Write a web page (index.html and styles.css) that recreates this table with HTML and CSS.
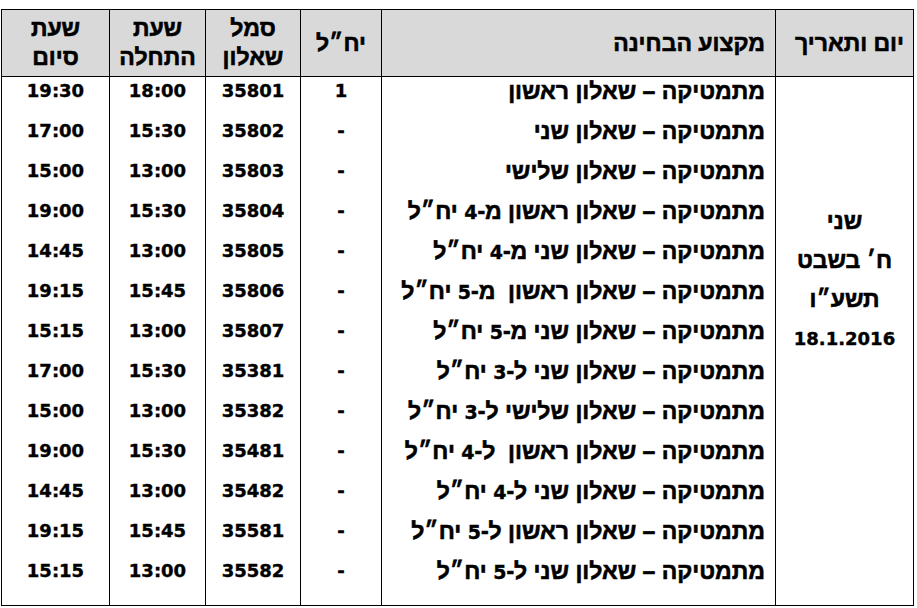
FILE: index.html
```html
<!DOCTYPE html>
<html lang="he" dir="rtl">
<head>
<meta charset="utf-8">
<title>לוח בחינות</title>
<link rel="stylesheet" href="styles.css">
</head>
<body>
<table class="exams">
  <colgroup>
    <col class="c-date">
    <col class="c-subj">
    <col class="c-units">
    <col class="c-code">
    <col class="c-start">
    <col class="c-end">
  </colgroup>
  <thead>
    <tr>
      <th class="h-date">יום ותאריך</th>
      <th class="h-subj">מקצוע הבחינה</th>
      <th>יח״ל</th>
      <th>סמל<br>שאלון</th>
      <th>שעת<br>התחלה</th>
      <th>שעת<br>סיום</th>
    </tr>
  </thead>
  <tbody>
    <tr>
      <td class="date">
        <div>שני</div>
        <div>ח׳ בשבט</div>
        <div>תשע״ו</div>
        <div class="num">18.1.2016</div>
      </td>
      <td class="subj">
        <div class="ln">מתמטיקה – שאלון ראשון</div>
        <div class="ln">מתמטיקה – שאלון שני</div>
        <div class="ln">מתמטיקה – שאלון שלישי</div>
        <div class="ln">מתמטיקה – שאלון ראשון מ-<span class="dig">4</span> יח״ל</div>
        <div class="ln">מתמטיקה – שאלון שני מ-<span class="dig">4</span> יח״ל</div>
        <div class="ln">מתמטיקה – שאלון ראשון&nbsp; מ-<span class="dig">5</span> יח״ל</div>
        <div class="ln">מתמטיקה – שאלון שני מ-<span class="dig">5</span> יח״ל</div>
        <div class="ln">מתמטיקה – שאלון שני ל-<span class="dig">3</span> יח״ל</div>
        <div class="ln">מתמטיקה – שאלון שלישי ל-<span class="dig">3</span> יח״ל</div>
        <div class="ln">מתמטיקה – שאלון ראשון&nbsp; ל-<span class="dig">4</span> יח״ל</div>
        <div class="ln">מתמטיקה – שאלון שני ל-<span class="dig">4</span> יח״ל</div>
        <div class="ln">מתמטיקה – שאלון ראשון ל-<span class="dig">5</span> יח״ל</div>
        <div class="ln">מתמטיקה – שאלון שני ל-<span class="dig">5</span> יח״ל</div>
      </td>
      <td class="mid num">
        <div class="ln">1</div>
        <div class="ln">-</div>
        <div class="ln">-</div>
        <div class="ln">-</div>
        <div class="ln">-</div>
        <div class="ln">-</div>
        <div class="ln">-</div>
        <div class="ln">-</div>
        <div class="ln">-</div>
        <div class="ln">-</div>
        <div class="ln">-</div>
        <div class="ln">-</div>
        <div class="ln">-</div>
      </td>
      <td class="mid num">
        <div class="ln">35801</div>
        <div class="ln">35802</div>
        <div class="ln">35803</div>
        <div class="ln">35804</div>
        <div class="ln">35805</div>
        <div class="ln">35806</div>
        <div class="ln">35807</div>
        <div class="ln">35381</div>
        <div class="ln">35382</div>
        <div class="ln">35481</div>
        <div class="ln">35482</div>
        <div class="ln">35581</div>
        <div class="ln">35582</div>
      </td>
      <td class="mid num">
        <div class="ln">18:00</div>
        <div class="ln">15:30</div>
        <div class="ln">13:00</div>
        <div class="ln">15:30</div>
        <div class="ln">13:00</div>
        <div class="ln">15:45</div>
        <div class="ln">13:00</div>
        <div class="ln">15:30</div>
        <div class="ln">13:00</div>
        <div class="ln">15:30</div>
        <div class="ln">13:00</div>
        <div class="ln">15:45</div>
        <div class="ln">13:00</div>
      </td>
      <td class="mid num">
        <div class="ln">19:30</div>
        <div class="ln">17:00</div>
        <div class="ln">15:00</div>
        <div class="ln">19:00</div>
        <div class="ln">14:45</div>
        <div class="ln">19:15</div>
        <div class="ln">15:15</div>
        <div class="ln">17:00</div>
        <div class="ln">15:00</div>
        <div class="ln">19:00</div>
        <div class="ln">14:45</div>
        <div class="ln">19:15</div>
        <div class="ln">15:15</div>
      </td>
    </tr>
  </tbody>
</table>
</body>
</html>
```

FILE: styles.css
```css
html, body {
  margin: 0;
  padding: 0;
  background: #ffffff;
}

body {
  padding: 9px 3px 0 3px;
  font-family: "Liberation Sans", "DejaVu Sans", sans-serif;
  font-weight: bold;
  font-size: 23px;
  color: #000;
  -webkit-text-stroke: 0.6px #000;
}

.num {
  font-family: "DejaVu Sans", "Liberation Sans", sans-serif;
  font-size: 18px;
  -webkit-text-stroke: 0.4px #000;
}

.dig {
  font-family: "DejaVu Sans", "Liberation Sans", sans-serif;
  font-size: 19px;
  -webkit-text-stroke: 0.4px #000;
}

.exams {
  direction: rtl;
  border-collapse: collapse;
  table-layout: fixed;
  width: 912px;
}

.c-date { width: 138px; }
.c-subj { width: 394px; }
.c-units { width: 81px; }
.c-code { width: 95px; }
.c-start { width: 96px; }
.c-end { width: 108px; }

.exams th,
.exams td {
  border: 1px solid #000;
  padding: 0;
}

.exams th {
  background: #d9d9d9;
  height: 66px;
  line-height: 29px;
  font-weight: bold;
  text-align: center;
  vertical-align: middle;
}

.exams th.h-subj {
  text-align: right;
  padding-right: 10px;
}

.exams th.h-date {
  text-align: right;
  padding-right: 9px;
}

.exams td {
  vertical-align: top;
  padding-bottom: 8px;
}

.ln {
  height: 40px;
  line-height: 28px;
  white-space: nowrap;
}

.subj {
  text-align: right;
  padding-right: 10px !important;
}

.mid {
  text-align: center;
}

.date {
  text-align: center;
  padding-top: 125px !important;
  line-height: 39px;
}
```
